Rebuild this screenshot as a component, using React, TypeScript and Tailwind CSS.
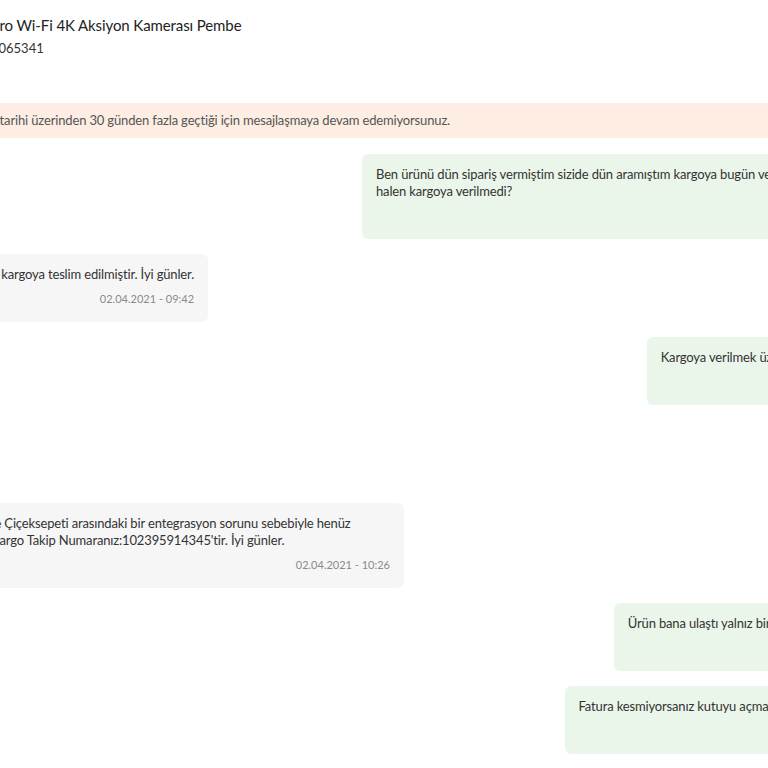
import React from 'react';

type Message = {
  id: number;
  mine: boolean;
  text: string;
  time: string;
};

const messages: Message[] = [
  {
    id: 1,
    mine: true,
    text: 'Ben ürünü dün sipariş vermiştim sizide dün aramıştım kargoya bugün verilecek dendi ama halen kargoya verilmedi?',
    time: '02.04.2021 - 09:15',
  },
  {
    id: 2,
    mine: false,
    text: 'Merhabalar, siparişin kargoya teslim edilmiştir. İyi günler.',
    time: '02.04.2021 - 09:42',
  },
  {
    id: 3,
    mine: true,
    text: 'Kargoya verilmek üzere bekliyor yazıyor.',
    time: '02.04.2021 - 09:50',
  },
  {
    id: 4,
    mine: true,
    text: 'Tamam',
    time: '02.04.2021 - 09:51',
  },
  {
    id: 5,
    mine: false,
    text: "Aras Kargo firması ile Çiçeksepeti arasındaki bir entegrasyon sorunu sebebiyle henüz güncellenmemiştir. Kargo Takip Numaranız:102395914345'tir. İyi günler.",
    time: '02.04.2021 - 10:26',
  },
  {
    id: 6,
    mine: true,
    text: 'Ürün bana ulaştı yalnız bir fatura gönderilmedi',
    time: '05.04.2021 - 14:02',
  },
  {
    id: 7,
    mine: true,
    text: 'Fatura kesmiyorsanız kutuyu açmadan iade edebilirim...',
    time: '05.04.2021 - 14:05',
  },
];

const Bubble: React.FC<{ msg: Message }> = ({ msg }) => (
  <div className={`flex ${msg.mine ? 'justify-end' : 'justify-start'}`}>
    <div
      className={`max-w-[534px] rounded-md pt-[12px] pb-[15px] px-[14px] ${
        msg.mine ? 'bg-[#ebf6ea]' : 'bg-[#f6f6f6]'
      }`}
    >
      <p className="text-[13px] leading-[17px] tracking-[-0.15px] text-[#333333]">{msg.text}</p>
      <p className="mt-[7px] text-right text-[11px] leading-[17px] text-[#8a8a8a]">{msg.time}</p>
    </div>
  </div>
);

export default function App() {
  return (
    <div className="w-full min-h-screen overflow-hidden bg-white">
      <div className="w-[1026px] -ml-[130px] font-['Lato','Noto_Sans',sans-serif]">
        {/* product header */}
        <div className="flex flex-col pt-[15px] pl-[34px]">
          <span className="text-[15px] leading-5 tracking-[-0.1px] text-[#222222]">
            Sjcam SJ10X Pro Wi-Fi 4K Aksiyon Kamerası Pembe
          </span>
          <span className="mt-1 text-[13px] leading-[18px] text-[#333333]">Sipariş No: 1021065341</span>
        </div>

        {/* warning */}
        <div className="mt-[46px] h-[35px] flex items-center pl-[25px] pr-[14px] bg-[#fdede2]">
          <span className="text-[13px] tracking-[-0.15px] text-[#555555]">
            Siparişinizin teslim tarihi üzerinden 30 günden fazla geçtiği için mesajlaşmaya devam edemiyorsunuz.
          </span>
        </div>

        {/* messages */}
        <div className="mt-[16px] flex flex-col gap-[15px]">
          {messages.map((m) => (
            <Bubble key={m.id} msg={m} />
          ))}
        </div>
      </div>
    </div>
  );
}
